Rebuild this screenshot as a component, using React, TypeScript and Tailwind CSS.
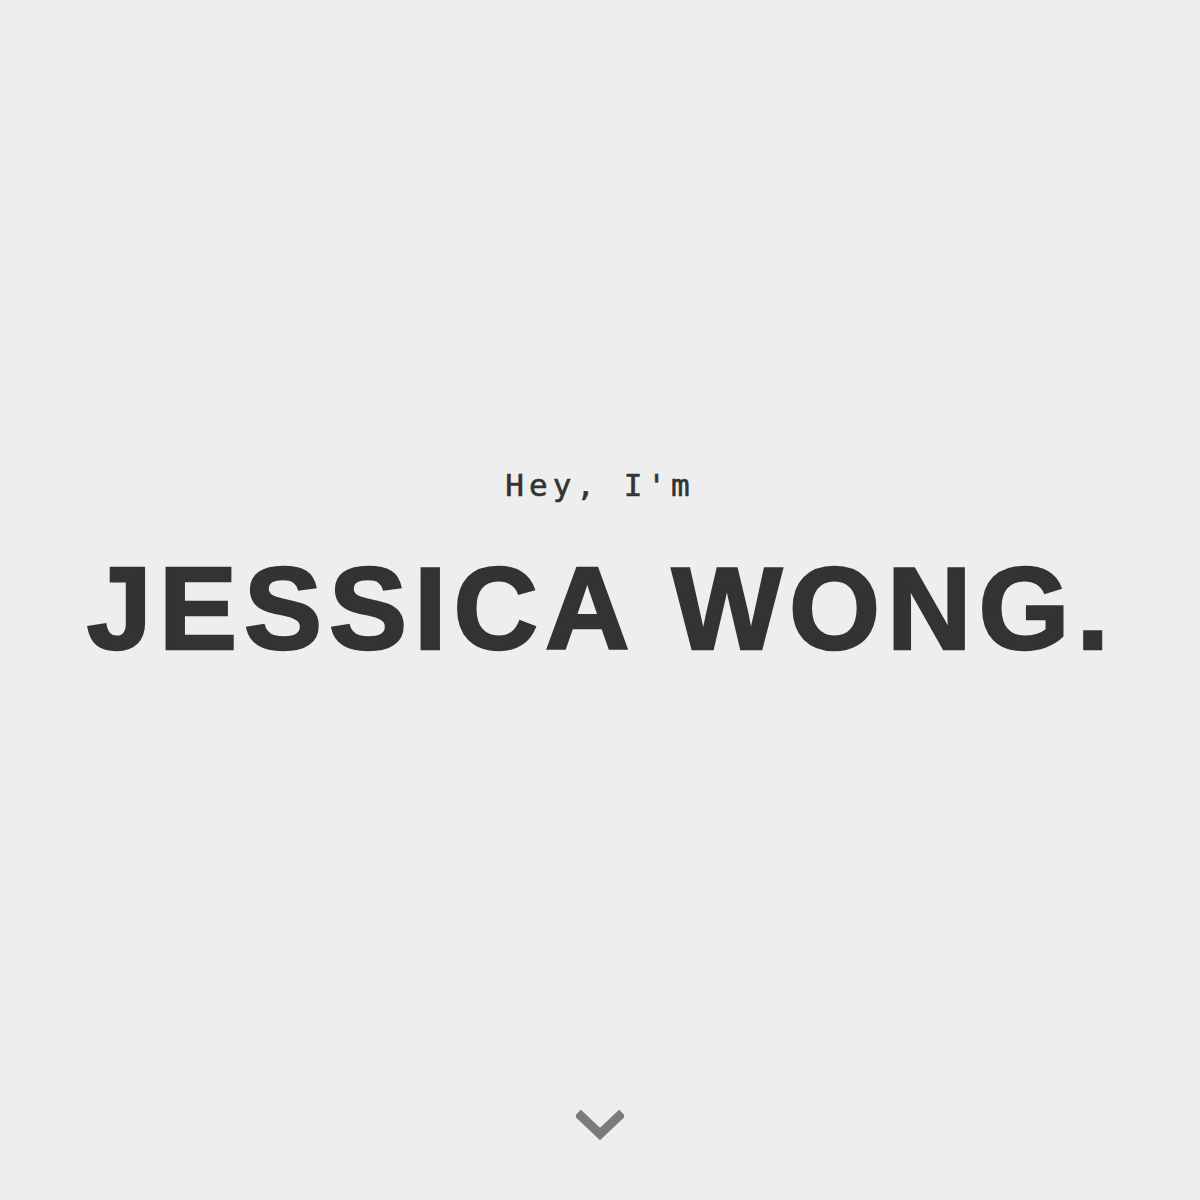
export default function App() {
  return (
    <div className="relative flex h-[1200px] w-full flex-col items-center justify-center bg-[#eeeeee] text-[#333333]">
      <div className="flex flex-col items-center pb-[64px]">
        <p className="text-[31px] leading-none tracking-[5px] text-[#333333] [-webkit-text-stroke:0.6px_#333333]" style={{ fontFamily: '"DejaVu Sans Mono", monospace' }}>
          Hey, I'm
        </p>
        <h1 className="mt-[49px] pl-[3px] text-[117px] font-bold leading-none tracking-[7px] text-[#333333] [-webkit-text-stroke:2.5px_#333333]" style={{ fontFamily: '"Liberation Sans", Arial, sans-serif' }}>
          JESSICA WONG.
        </h1>
      </div>
      <div className="absolute bottom-[58px] left-1/2 -translate-x-1/2">
        <svg width="48" height="32" viewBox="0 0 48 32">
          <path d="M5 6 L24 24 L43 6" fill="none" stroke="#7b7b7b" strokeWidth="9" strokeLinecap="square" />
        </svg>
      </div>
    </div>
  );
}
